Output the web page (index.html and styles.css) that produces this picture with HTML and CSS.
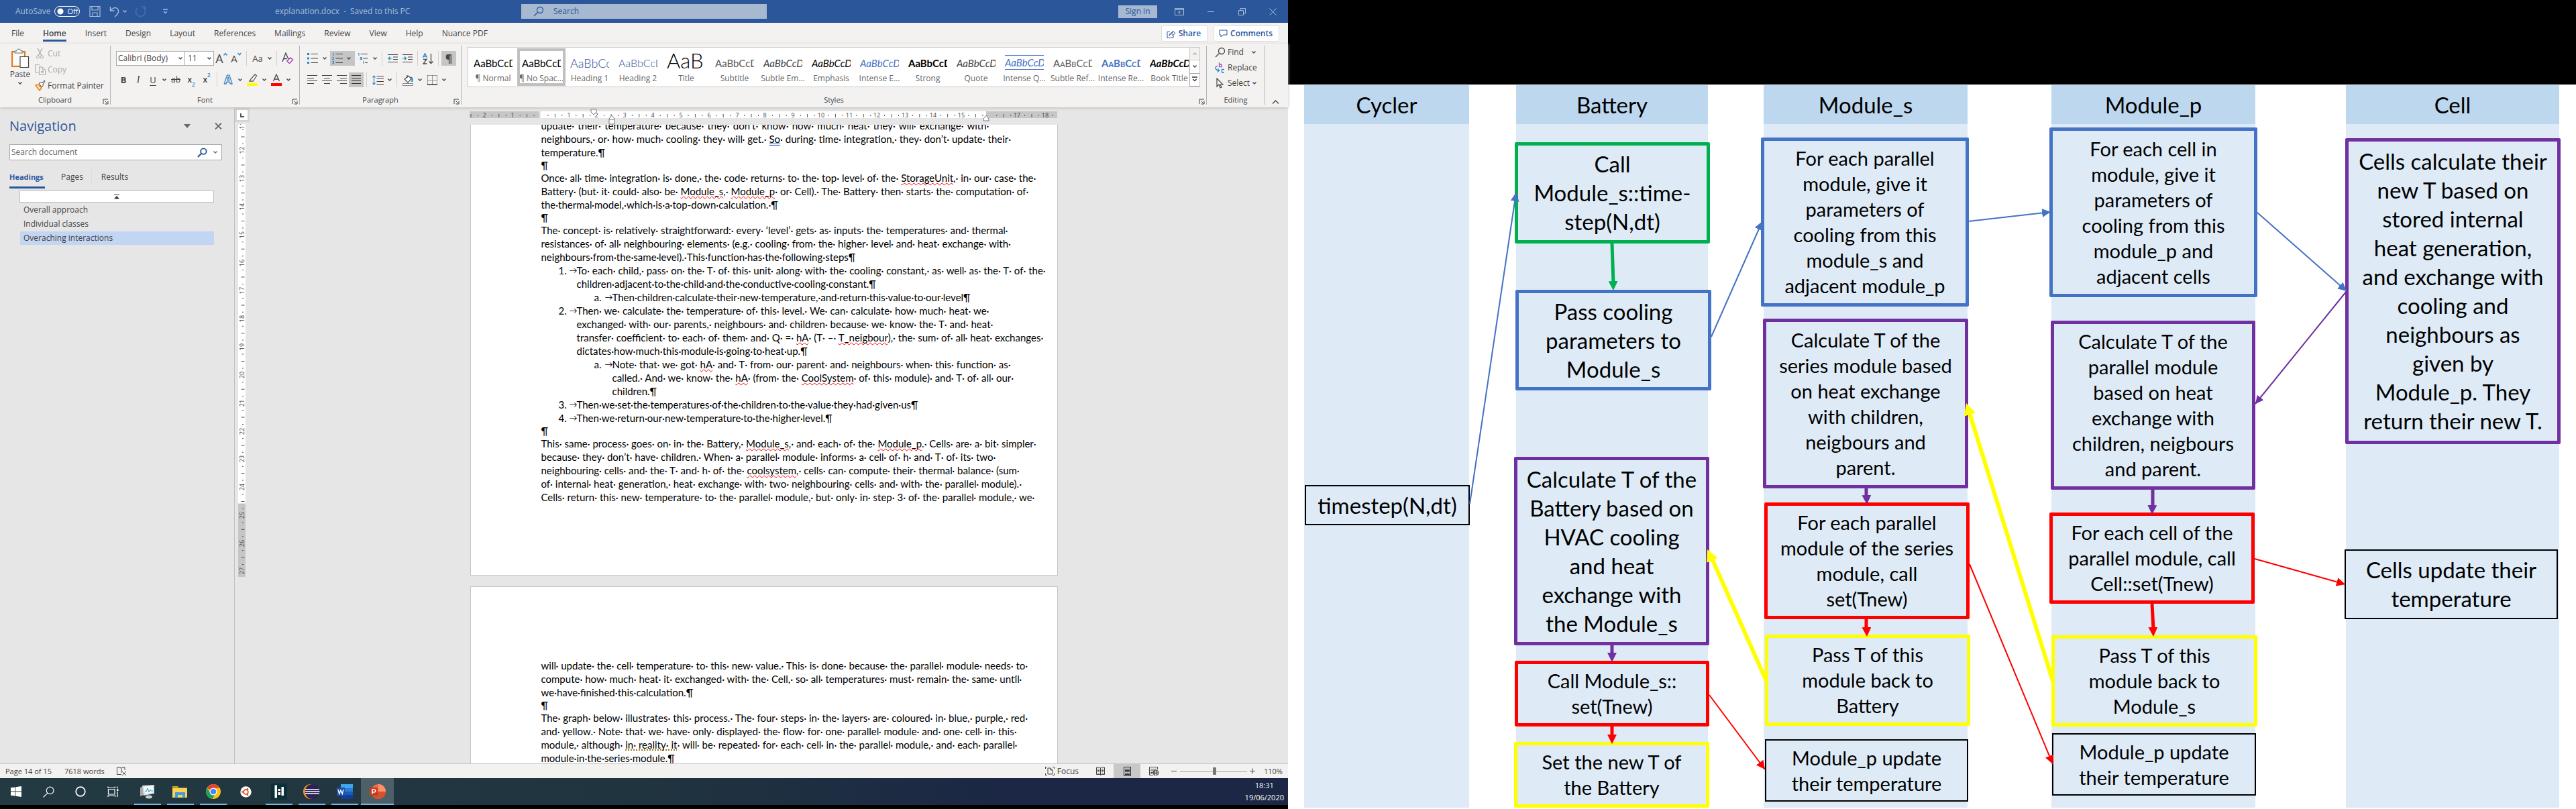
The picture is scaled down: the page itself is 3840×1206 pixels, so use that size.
FILE: index.html
```html
<!DOCTYPE html>
<html lang="en">
<head>
<meta charset="utf-8">
<title>explanation.docx - Saved to this PC</title>
<link rel="stylesheet" href="styles.css">
</head>
<body>
<svg class="defs" aria-hidden="true">
  <defs>
    <symbol id="chev" viewBox="0 0 8 8"><path d="M1.5 2.5 4 5l2.500-2.500" fill="none" stroke="currentColor" stroke-width="1.400"/></symbol>
    <symbol id="launch" viewBox="0 0 9 9"><path d="M1 8V1h7M3.500 3.500 7 7M8 3.500V8H3.500" fill="none" stroke="#444"/></symbol>
    <symbol id="glass" viewBox="0 0 16 16"><circle cx="10" cy="6" r="4.500" fill="none" stroke="currentColor" stroke-width="1.300"/><path d="M6.700 9.300 1 15" stroke="currentColor" stroke-width="1.300"/></symbol>
    <marker id="m-blue" viewBox="0 0 12 12" refX="12" refY="6" markerWidth="13" markerHeight="13" markerUnits="userSpaceOnUse" orient="auto"><path d="M0 0 12 6 0 12z" fill="#4472c4"/></marker>
    <marker id="m-purple-s" viewBox="0 0 12 12" refX="12" refY="6" markerWidth="12" markerHeight="12" markerUnits="userSpaceOnUse" orient="auto"><path d="M0 0 12 6 0 12z" fill="#7030a0"/></marker>
    <marker id="m-red-s" viewBox="0 0 12 12" refX="12" refY="6" markerWidth="13" markerHeight="13" markerUnits="userSpaceOnUse" orient="auto"><path d="M0 0 12 6 0 12z" fill="#f00"/></marker>
    <marker id="m-green" viewBox="0 0 12 12" refX="12" refY="6" markerWidth="14" markerHeight="14" markerUnits="userSpaceOnUse" orient="auto"><path d="M0 0 12 6 0 12z" fill="#00b050"/></marker>
    <marker id="m-purple" viewBox="0 0 12 12" refX="12" refY="6" markerWidth="14" markerHeight="14" markerUnits="userSpaceOnUse" orient="auto"><path d="M0 0 12 6 0 12z" fill="#7030a0"/></marker>
    <marker id="m-red" viewBox="0 0 12 12" refX="12" refY="6" markerWidth="14" markerHeight="14" markerUnits="userSpaceOnUse" orient="auto"><path d="M0 0 12 6 0 12z" fill="#f00"/></marker>
    <marker id="m-yellow" viewBox="0 0 12 12" refX="12" refY="6" markerWidth="18" markerHeight="18" markerUnits="userSpaceOnUse" orient="auto"><path d="M0 0 12 6 0 12z" fill="#ff0"/></marker>
  </defs>
</svg>
<div class="screens">
<section class="desktop">
  <header class="titlebar">
    <div class="quick">
      <label class="autosave">AutoSave <input type="checkbox"><span class="pill">Off</span></label>
      <button class="q save" aria-label="Save"><svg width="17" height="18" viewBox="0 0 17 18"><path d="M1 1.500h15v15H1zM4 1.500v5.500h9V1.500M5 16.500V11h7v5.500" fill="none" stroke="currentColor" stroke-width="1.200"/></svg></button>
      <button class="q undo" aria-label="Undo"><svg width="16" height="18" viewBox="0 0 16 18"><path d="M1.500 2v6h6M1.500 8C4 4 9 2 12 5c4 4 0 9-4 12" fill="none" stroke="currentColor" stroke-width="1.400"/></svg><svg width="8" height="8"><use href="#chev"/></svg></button>
      <button class="q redo" aria-label="Redo"><svg width="18" height="18" viewBox="0 0 18 18"><path d="M11 2h5v5M14 4a7 7 0 1 1-9 0" fill="none" stroke="currentColor" stroke-width="1.400"/></svg></button>
      <button class="q" aria-label="Customise"><svg width="9" height="9" viewBox="0 0 9 9"><path d="M1 1h7M2 4l2.500 2.500L7 4" fill="none" stroke="currentColor" stroke-width="1.300"/></svg></button>
    </div>
    <div class="doctitle">explanation.docx&nbsp; -&nbsp; Saved to this PC</div>
    <label class="topsearch"><svg width="16" height="16"><use href="#glass"/></svg><input type="text" placeholder="Search" aria-label="Search"></label>
    <div class="winctl">
      <button class="signin">Sign in</button>
      <button class="q" aria-label="Ribbon options"><svg width="14" height="11" viewBox="0 0 14 11"><path d="M.5.5h13v10H.5zM.5 2.500h13M7 9V5M5 6.500 7 4.500l2 2" fill="none" stroke="currentColor"/></svg></button>
      <button class="q" aria-label="Minimise"><svg width="11" height="11" viewBox="0 0 11 11"><path d="M0 5.500h10" stroke="currentColor"/></svg></button>
      <button class="q" aria-label="Restore"><svg width="11" height="11" viewBox="0 0 11 11"><path d="M.5 3.500h7v7h-7zM3 3.500V.5h7.500V8H8" fill="none" stroke="currentColor"/></svg></button>
      <button class="q" aria-label="Close"><svg width="11" height="11" viewBox="0 0 11 11"><path d="m.5.5 10 10M10.500.5l-10 10" stroke="currentColor"/></svg></button>
    </div>
  </header>
  <nav class="tabs">
    <a href="#">File</a><a href="#" class="on">Home</a><a href="#">Insert</a><a href="#">Design</a><a href="#">Layout</a><a href="#">References</a><a href="#">Mailings</a><a href="#">Review</a><a href="#">View</a><a href="#">Help</a><a href="#">Nuance PDF</a>
    <div class="share">
      <button><svg width="14" height="13" viewBox="0 0 14 13"><path d="M5 3.500H1v9h9V9M4 9c0-3 2-4.500 5-4.500V2l4 3.500L9 9V6.500C7 6.500 5 7 4 9z" fill="none" stroke="#2b579a"/></svg>Share</button>
      <button><svg width="13" height="12" viewBox="0 0 13 12"><path d="M1 1h11v7H6l-3 3V8H1z" fill="none" stroke="#2b579a"/></svg>Comments</button>
    </div>
  </nav>
  <div class="ribbon">
    <section class="group clip">
      <div class="tools clipbody">
        <button class="paste"><svg width="28" height="30" viewBox="0 0 28 30"><path d="M2 5h19v22H2z" fill="#fce9c8" stroke="#e07b1a" stroke-width="2"/><path d="M4 7h15v18H4z" fill="#fafafa"/><path d="M6 7V4h3c0-4 6-4 6 0h3v3z" fill="#fff" stroke="#666"/><path d="M14 12.500h12.500v16H14z" fill="#fff" stroke="#444" stroke-width="1.200"/></svg>Paste<svg width="8" height="8"><use href="#chev"/></svg></button>
        <div class="cliplist">
          <button class="off"><svg width="16" height="16" viewBox="0 0 16 16"><path d="m4 0 6 11M11 0 5 11" stroke="#aaa" stroke-width="1.300"/><circle cx="4.500" cy="13" r="2" fill="none" stroke="#aaa"/><circle cx="10.500" cy="13" r="2" fill="none" stroke="#aaa"/></svg>Cut</button>
          <button class="off"><svg width="16" height="16" viewBox="0 0 16 16"><path d="M6 12H.500V.500H6l2 2M6.500 4h5l4 4v7.500h-9zM11 4v4h4M9 10.500h4M9 12.500h4" fill="none" stroke="#aaa"/></svg>Copy</button>
          <button><svg width="16" height="16" viewBox="0 0 16 16"><path d="m1 7 4-1 5 5-3 4z" fill="#fce0b0" stroke="#e8821e" stroke-width="1.500"/><path d="m6 4 3-1 2 1 3-4 1 1-3 5 0 2-2 2z" fill="#fff" stroke="#444"/></svg>Format Painter</button>
        </div>
      </div>
      <div class="glabel">Clipboard<svg width="9" height="9"><use href="#launch"/></svg></div>
    </section>
    <section class="group font">
      <div class="tools">
        <div class="row">
          <span class="combo fname"><select aria-label="Font"><option>Calibri (Body)</option></select><svg width="8" height="8"><use href="#chev"/></svg></span>
          <span class="combo fsize"><select aria-label="Font size"><option>11</option></select><svg width="8" height="8"><use href="#chev"/></svg></span>
          <button class="w22 big">A<svg class="sup" width="6" height="6" viewBox="0 0 6 6"><path d="m.5 4.500 2.500-3 2.500 3" fill="none" stroke="#2088c8" stroke-width="1.300"/></svg></button>
          <button class="w22 mid">A<svg class="sup" width="6" height="6" viewBox="0 0 6 6"><path d="m.5 1 2.500 3 2.500-3" fill="none" stroke="#2088c8" stroke-width="1.300"/></svg></button>
          <i class="sep"></i>
          <button class="w24 aa">Aa</button><button class="c" aria-label="More"><svg width="8" height="8"><use href="#chev"/></svg></button>
          <i class="sep"></i>
          <button class="w24" aria-label="Clear formatting"><svg width="18" height="18" viewBox="0 0 18 18"><path d="M1 14 6 1l4 9M3 9.500h5" fill="none" stroke="#444" stroke-width="1.300"/><path d="m8 13 5-5 3.500 3-5 5.500z" fill="#fff" stroke="#a83cb8" stroke-width="1.500"/></svg></button>
        </div>
        <div class="row">
          <button class="w22 bold">B</button><button class="w22 ital">I</button><button class="w22 und">U</button><button class="c" aria-label="More"><svg width="8" height="8"><use href="#chev"/></svg></button>
          <button class="w22 strike">ab</button><button class="w24 sb">x<sub>2</sub></button><button class="w22 sb">x<sup>2</sup></button>
          <i class="sep"></i>
          <button class="w24 glow">A</button><button class="c" aria-label="More"><svg width="8" height="8"><use href="#chev"/></svg></button>
          <button class="w24" aria-label="Highlight"><svg width="16" height="18" viewBox="0 0 16 18"><path d="m6 8 6-7 2.500 2L9 11H4z" fill="#fff" stroke="#555" stroke-width="1.300"/><path d="M0 14h16v4H0z" fill="#ff0"/></svg></button><button class="c" aria-label="More"><svg width="8" height="8"><use href="#chev"/></svg></button>
          <button class="w24" aria-label="Font colour"><svg width="16" height="18" viewBox="0 0 16 18"><path d="M3.500 11 8 1l4.500 10M5 8h6" fill="none" stroke="#444" stroke-width="1.300"/><path d="M0 14h16v4H0z" fill="red"/></svg></button><button class="c" aria-label="More"><svg width="8" height="8"><use href="#chev"/></svg></button>
        </div>
      </div>
      <div class="glabel">Font<svg width="9" height="9"><use href="#launch"/></svg></div>
    </section>
    <section class="group para">
      <div class="tools">
        <div class="row">
          <button class="w24" aria-label="Bullets"><svg width="16" height="16" viewBox="0 0 16 16"><path d="M0 0h3v3H0zM0 6.500h3v3H0zM0 13h3v3H0z" fill="#2088c8"/><path d="M5.500 1.500H16M5.500 8H16M5.500 14.500H16" stroke="#444"/></svg></button><button class="c" aria-label="More"><svg width="8" height="8"><use href="#chev"/></svg></button>
          <span class="pressed"><button class="w22" aria-label="Numbering"><svg width="16" height="16" viewBox="0 0 16 16"><path d="M1 .5h1V4M.5 6.500h2V8L.5 9.500h2M.5 12h2v3.500h-2M1 14h1" fill="none" stroke="#2088c8"/><path d="M5.500 1.500H16M5.500 8H16M5.500 14.500H16" stroke="#444"/></svg></button><button class="c" aria-label="More"><svg width="8" height="8"><use href="#chev"/></svg></button></span>
          <button class="w24" aria-label="Multilevel list"><svg width="16" height="16" viewBox="0 0 16 16"><path d="M1 .5h1V4M4 6.500h2.500v3H4V8h2M9 12v4M9 10v1" fill="none" stroke="#2088c8"/><path d="M4.500 1.500H15M8.500 8H15M11 14.500h4" stroke="#444"/></svg></button><button class="c" aria-label="More"><svg width="8" height="8"><use href="#chev"/></svg></button>
          <i class="sep"></i>
          <button class="w22" aria-label="Decrease indent"><svg width="15" height="14" viewBox="0 0 15 14"><path d="M0 1.500h15M8 5h7M8 8.500h7M0 12.500h15" stroke="#444"/><path d="M6.500 7H1M3.500 4.500 1 7l2.500 2.500" fill="none" stroke="#2088c8" stroke-width="1.200"/></svg></button>
          <button class="w22" aria-label="Increase indent"><svg width="15" height="14" viewBox="0 0 15 14"><path d="M0 1.500h15M8 5h7M8 8.500h7M0 12.500h15" stroke="#444"/><path d="M0 7h5.500M3 4.500 5.500 7 3 9.500" fill="none" stroke="#2088c8" stroke-width="1.200"/></svg></button>
          <i class="sep"></i>
          <button class="w22" aria-label="Sort"><svg width="17" height="17" viewBox="0 0 17 17"><path d="M.5 7 3.500.5 6.500 7M1.500 5h4" fill="none" stroke="#2088c8" stroke-width="1.300"/><path d="M1 9.500h5L1 16h5.500M12.500 1v15M9.500 12.500l3 3 3-3" fill="none" stroke="#444" stroke-width="1.300"/></svg></button>
          <i class="sep"></i>
          <button class="w22 pressed pil">¶</button>
        </div>
        <div class="row">
          <button class="w22" aria-label="Align left"><svg width="15" height="14" viewBox="0 0 15 14"><path d="M0 .5h15M0 4.500h10M0 8.500h15M0 12.500h10" stroke="#444"/></svg></button>
          <button class="w22" aria-label="Centre"><svg width="15" height="14" viewBox="0 0 15 14"><path d="M0 .5h15M3 4.500h9M0 8.500h15M3 12.500h9" stroke="#444"/></svg></button>
          <button class="w22" aria-label="Align right"><svg width="15" height="14" viewBox="0 0 15 14"><path d="M0 .5h15M5 4.500h10M0 8.500h15M5 12.500h10" stroke="#444"/></svg></button>
          <button class="w22 pressed" aria-label="Justify"><svg width="14" height="14" viewBox="0 0 14 14"><path d="M0 .5h14M0 4.500h14M0 8.500h14M0 12.500h14" stroke="#333"/></svg></button>
          <i class="sep"></i>
          <button class="w24" aria-label="Line spacing"><svg width="17" height="15" viewBox="0 0 17 15"><path d="M6.500 1.500H17M6.500 5.500H17M6.500 9.500H17M6.500 13.500H17" stroke="#444"/><path d="M2.500 1v13M.5 3.500l2-2.500 2 2.500M.5 11.500l2 2.500 2-2.500" fill="none" stroke="#2088c8" stroke-width="1.200"/></svg></button><button class="c" aria-label="More"><svg width="8" height="8"><use href="#chev"/></svg></button>
          <i class="sep"></i>
          <button class="w24" aria-label="Shading"><svg width="16" height="17" viewBox="0 0 16 17"><path d="m3 7 6-5 4 5-5 5zM7 5V1" fill="#fff" stroke="#444" stroke-width="1.200"/><path d="M12 4c3 1 3 4 2 7" fill="none" stroke="#2088c8" stroke-width="2"/><path d="M.5 13.500h15v3H.5z" fill="#fff" stroke="#888"/></svg></button><button class="c" aria-label="More"><svg width="8" height="8"><use href="#chev"/></svg></button>
          <button class="w24" aria-label="Borders"><svg width="15" height="15" viewBox="0 0 15 15"><path d="M.5.5h14M.5.5v13M14.500.5v13M7.500.5v13M.5 7.500h14" stroke="#444" stroke-dasharray="1 1"/><path d="M0 14.500h15" stroke="#000" stroke-width="1.400"/></svg></button><button class="c" aria-label="More"><svg width="8" height="8"><use href="#chev"/></svg></button>
        </div>
      </div>
      <div class="glabel">Paragraph<svg width="9" height="9"><use href="#launch"/></svg></div>
    </section>
    <section class="group styles">
      <div class="gallery">
        <div class="cards">
          <button class="card"><b>AaBbCcDc</b><span>¶ Normal</span></button>
          <button class="card sel"><b>AaBbCcDc</b><span>¶ No Spac...</span></button>
          <button class="card h1"><b>AaBbCc</b><span>Heading 1</span></button>
          <button class="card h2"><b>AaBbCcD</b><span>Heading 2</span></button>
          <button class="card tt"><b>AaB</b><span>Title</span></button>
          <button class="card st"><b>AaBbCcD</b><span>Subtitle</span></button>
          <button class="card se"><b>AaBbCcDc</b><span>Subtle Em...</span></button>
          <button class="card em"><b>AaBbCcDc</b><span>Emphasis</span></button>
          <button class="card ie"><b>AaBbCcDc</b><span>Intense E...</span></button>
          <button class="card sg"><b>AaBbCcDc</b><span>Strong</span></button>
          <button class="card se"><b>AaBbCcDc</b><span>Quote</span></button>
          <button class="card iq"><b>AaBbCcDc</b><span>Intense Q...</span></button>
          <button class="card sr"><b>AaBbCcDc</b><span>Subtle Ref...</span></button>
          <button class="card ir"><b>AaBbCcDc</b><span>Intense Re...</span></button>
          <button class="card bt"><b>AaBbCcDc</b><span>Book Title</span></button>
        </div>
        <div class="updown">
          <button class="dim" aria-label="Up"><svg width="8" height="8" viewBox="0 0 8 8"><path d="M1.500 5.500 4 3l2.500 2.500" fill="none" stroke="#aaa" stroke-width="1.400"/></svg></button>
          <button aria-label="Down"><svg width="8" height="8"><use href="#chev"/></svg></button>
          <button aria-label="More styles"><svg width="8" height="9" viewBox="0 0 8 9"><path d="M0 1h8M1.500 4 4 6.500 6.500 4" fill="none" stroke="#333" stroke-width="1.400"/></svg></button>
        </div>
      </div>
      <div class="glabel">Styles<svg width="9" height="9"><use href="#launch"/></svg></div>
    </section>
    <section class="group edit">
      <div class="tools elist">
        <button><svg width="16" height="16"><use href="#glass"/></svg>Find<svg class="cv far" width="8" height="8"><use href="#chev"/></svg></button>
        <button><svg width="16" height="16" viewBox="0 0 16 16"><path d="M6.500 0v6.500h3.500V3H6.500" fill="none" stroke="#b04cc0" stroke-width="1.300"/><path d="M14 10.500h-3.500V15H14M4 5c-5 2-3 7 2 7M4 9.500 6.500 12 4 14.500" fill="none" stroke="#2088c8" stroke-width="1.300"/></svg>Replace</button>
        <button><svg width="16" height="16" viewBox="0 0 16 16"><path d="M3 1v12l3-3 2 5 2-1-2-4h4z" fill="none" stroke="#444" stroke-width="1.200"/></svg>Select<svg class="cv" width="8" height="8"><use href="#chev"/></svg></button>
      </div>
      <div class="glabel">Editing</div>
    </section>
    <button class="collapse" aria-label="Collapse ribbon"><svg width="11" height="8" viewBox="0 0 11 8"><path d="m1 6.500 4.500-4.500L10 6.500" fill="none" stroke="#444" stroke-width="1.400"/></svg></button>
  </div>

  <div class="work">
    <aside class="navpane">
      <div class="navhead"><h2>Navigation</h2><button aria-label="Pane options"><svg width="10" height="6" viewBox="0 0 10 6"><path d="M0 0h10L5 6z" fill="#666"/></svg></button><button aria-label="Close pane"><svg width="11" height="10" viewBox="0 0 11 10"><path d="m1 .5 9 9M10 .5l-9 9" stroke="#666" stroke-width="1.800"/></svg></button></div>
      <label class="navsearch"><input type="text" placeholder="Search document" aria-label="Search document"><svg width="15" height="15" viewBox="0 0 16 16"><circle cx="10" cy="6" r="4.500" fill="none" stroke="#2b579a" stroke-width="2"/><path d="M6.700 9.300 1 15" stroke="#2b579a" stroke-width="2.400"/></svg><svg width="8" height="8"><use href="#chev"/></svg></label>
      <div class="navtabs"><a href="#" class="on">Headings</a><a href="#">Pages</a><a href="#">Results</a></div>
      <button class="jump" aria-label="Jump to top"><svg width="8" height="7" viewBox="0 0 8 7"><path d="M0 0h8v1H0zM4 2l4 4.500H0z" fill="#333"/></svg></button>
      <ul class="outline"><li>Overall approach</li><li>Individual classes</li><li class="sel">Overaching interactions</li></ul>
    </aside>
    <div class="docarea">
      <div class="vrulercol">
        <div class="corner"><svg width="16" height="15" viewBox="0 0 16 15"><path d="M0 0h16v15H0z" fill="#fff"/><path d="M6 5v5h5" fill="none" stroke="#555" stroke-width="2"/></svg></div>
        <svg class="vruler" width="12" height="676" viewBox="0 0 12 676">
          <path d="M0 0h11v565H0z" fill="#fff"/><path d="M0 566h11v109H0z" fill="#c6c6c6"/>
          <path d="M7 18.600V676" stroke="#555" stroke-width="5" stroke-dasharray="1 40.800"/>
          <path d="M7 8.100V676" stroke="#555" stroke-width="2" stroke-dasharray="1 19.900"/>
          <g class="rnum" transform="rotate(-90)"><text x="-2" y="9">11</text><text x="-39" y="9">12</text><text x="-81" y="9">13</text><text x="-123" y="9">14</text><text x="-165" y="9">15</text><text x="-207" y="9">16</text><text x="-248" y="9">17</text><text x="-290" y="9">18</text><text x="-332" y="9">19</text><text x="-374" y="9">20</text><text x="-416" y="9">21</text><text x="-458" y="9">22</text><text x="-499" y="9">23</text><text x="-541" y="9">24</text><text x="-583" y="9">25</text><text x="-625" y="9">26</text><text x="-666" y="9">27</text></g>
        </svg>
      </div>
      <div class="canvas">
        <svg class="hruler" width="876" height="24" viewBox="0 0 876 24">
          <path d="M0 4h104v10H0zM770 4h106v10H770z" fill="#c6c6c6"/><path d="M106 4h664v10H106z" fill="#fff"/>
          <path d="M1.500 10.500H876" stroke="#555" stroke-width="5" stroke-dasharray="1 40.800"/>
          <path d="M12 10H876" stroke="#555" stroke-width="2" stroke-dasharray="1 19.900"/>
          <g class="rnum"><text x="22" y="13">2</text><text x="64" y="13">1</text><text x="148" y="13">1</text><text x="189" y="13">2</text><text x="231" y="13">3</text><text x="273" y="13">4</text><text x="315" y="13">5</text><text x="357" y="13">6</text><text x="399" y="13">7</text><text x="440" y="13">8</text><text x="482" y="13">9</text><text x="524" y="13">10</text><text x="566" y="13">11</text><text x="607" y="13">12</text><text x="649" y="13">13</text><text x="691" y="13">14</text><text x="733" y="13">15</text><text x="816" y="13">17</text><text x="858" y="13">18</text></g>
          <path d="M181 1h8v4l-4 4-4-4z" fill="#fff" stroke="#777"/><path d="m212 10 4 5v8h-8v-8zM208 16h8" fill="#fff" stroke="#777"/><path d="m770 10 4 5v3h-8v-3z" fill="#fff" stroke="#777"/>
        </svg>
        <div class="scroller">
          <article class="page first">
            <p><span class="ln">update· their· temperature· because· they· don’t· know· how· much· heat· they· will· exchange· with·</span><span class="ln">neighbours,· or· how· much· cooling· they· will· get.· <u class="gram">So</u>· during· time· integration,· they· don’t· update· their·</span><span class="ln end">temperature.¶</span></p>
            <p class="blank">¶</p>
            <p><span class="ln">Once· all· time· integration· is· done,· the· code· returns· to· the· top· level· of· the· <u>StorageUnit</u>,· in· our· case· the·</span><span class="ln">Battery· (but· it· could· also· be· <u>Module_s</u>,· <u>Module_p</u>· or· Cell).· The· Battery· then· starts· the· computation· of·</span><span class="ln end">the·thermal·model,·which·is·a·top-down·calculation.·¶</span></p>
            <p class="blank">¶</p>
            <p><span class="ln">The· concept· is· relatively· straightforward:· every· ‘level’· gets· as· inputs· the· temperatures· and· thermal·</span><span class="ln">resistances· of· all· neighbouring· elements· (e.g.· cooling· from· the· higher· level· and· heat· exchange· with·</span><span class="ln end">neighbours·from·the·same·level).·This·function·has·the·following·steps¶</span></p>
            <ol class="steps">
              <li><span>1.</span><span class="tab">→</span><p><span class="ln">To· each· child,· pass· on· the· T· of· this· unit· along· with· the· cooling· constant,· as· well· as· the· T· of· the·</span><span class="ln end">children·adjacent·to·the·child·and·the·conductive·cooling·constant.¶</span></p></li>
              <li class="sub"><span>a.</span><span class="tab">→</span><p><span class="ln end">Then·children·calculate·their·new·temperature,·and·return·this·value·to·our·level¶</span></p></li>
              <li><span>2.</span><span class="tab">→</span><p><span class="ln">Then· we· calculate· the· temperature· of· this· level.· We· can· calculate· how· much· heat· we·</span><span class="ln">exchanged· with· our· parents,· neighbours· and· children· because· we· know· the· T· and· heat·</span><span class="ln">transfer· coefficient· to· each· of· them· and· Q· =· <u>hA</u>· (T· –· <u>T_neigbour</u>),· the· sum· of· all· heat· exchanges·</span><span class="ln end">dictates·how·much·this·module·is·going·to·heat·up.¶</span></p></li>
              <li class="sub"><span>a.</span><span class="tab">→</span><p><span class="ln">Note· that· we· got· <u>hA</u>· and· T· from· our· parent· and· neighbours· when· this· function· as·</span><span class="ln">called.· And· we· know· the· <u>hA</u>· (from· the· <u>CoolSystem</u>· of· this· module)· and· T· of· all· our·</span><span class="ln end">children.¶</span></p></li>
              <li><span>3.</span><span class="tab">→</span><p><span class="ln end">Then·we·set·the·temperatures·of·the·children·to·the·value·they·had·given·us¶</span></p></li>
              <li><span>4.</span><span class="tab">→</span><p><span class="ln end">Then·we·return·our·new·temperature·to·the·higher·level.¶</span></p></li>
            </ol>
            <p class="blank">¶</p>
            <p><span class="ln">This· same· process· goes· on· in· the· Battery,· <u>Module_s</u>,· and· each· of· the· <u>Module_p</u>.· Cells· are· a· bit· simpler·</span><span class="ln">because· they· don’t· have· children.· When· a· parallel· module· informs· a· cell· of· h· and· T· of· its· two·</span><span class="ln">neighbouring· cells· and· the· T· and· h· of· the· <u>coolsystem</u>,· cells· can· compute· their· thermal· balance· (sum·</span><span class="ln">of· internal· heat· generation,· heat· exchange· with· two· neighbouring· cells· and· with· the· parallel· module).·</span><span class="ln">Cells· return· this· new· temperature· to· the· parallel· module,· but· only· in· step· 3· of· the· parallel· module,· we·</span></p>
          </article>
          <article class="page second">
            <p><span class="ln">will· update· the· cell· temperature· to· this· new· value.· This· is· done· because· the· parallel· module· needs· to·</span><span class="ln">compute· how· much· heat· it· exchanged· with· the· Cell,· so· all· temperatures· must· remain· the· same· until·</span><span class="ln end">we·have·finished·this·calculation.¶</span></p>
            <p class="blank">¶</p>
            <p><span class="ln">The· graph· below· illustrates· this· process.· The· four· steps· in· the· layers· are· coloured· in· blue,· purple,· red·</span><span class="ln">and· yellow.· Note· that· we· have· only· displayed· the· flow· for· one· parallel· module· and· one· cell· in· this·</span><span class="ln">module,· although· <u class="clar">in· reality· it</u>· will· be· repeated· for· each· cell· in· the· parallel· module,· and· each· parallel·</span><span class="ln end">module·in·the·series·module.¶</span></p>
          </article>
        </div>
      </div>
    </div>
  </div>

  <footer class="status">
    <span class="pg">Page 14 of 15</span><span class="wc">7618 words</span>
    <svg width="15" height="13" viewBox="0 0 15 13"><path d="M7 11.500H.500V1H5l2 1.500V9M7 2.500 8 1h4v4M8 7l6 6M14 7l-6 6" fill="none" stroke="#444"/></svg>
    <div class="views">
      <button class="focus"><svg width="14" height="13" viewBox="0 0 14 13"><path d="M3 .5H.500V3M11 .5h2.500V3M3 12.500H.500V10M11 12.500h2.500V10M4 2h4l3 3v6H4zM8 2v3h3" fill="none" stroke="#444"/></svg>Focus</button>
      <button class="v" aria-label="Read mode"><svg width="13" height="13" viewBox="0 0 13 13"><path d="M6.500 2v10.500M.5 1h5l1 1 1-1h5v10.500h-5l-1 1-1-1h-5zM2 3.500h3M2 5.500h3M2 7.500h3M2 9.500h3M8 3.500h3M8 5.500h3M8 7.500h3M8 9.500h3" fill="none" stroke="#444"/></svg></button>
      <button class="v on" aria-label="Print layout"><svg width="11" height="14" viewBox="0 0 11 14"><path d="M.5.5h10v13H.5zM2 3.500h7M2 5.500h7M2 7.500h7M2 9.500h7M2 11.500h7" fill="none" stroke="#222"/></svg></button>
      <button class="v" aria-label="Web layout"><svg width="15" height="13" viewBox="0 0 15 13"><path d="M6 12.500H.500V.500h12V4M2 3.500h9M2 6h5M2 8.500h4M2 10.500h3" fill="none" stroke="#444"/><circle cx="10" cy="9" r="4" fill="#f3f2f1" stroke="#444"/><path d="M6 8h8M6 10.500h8M8.500 5.500v7M11.500 5.500v7" stroke="#444"/></svg></button>
      <button class="pm" aria-label="Zoom out"><svg width="9" height="9" viewBox="0 0 9 9"><path d="M0 4.500h8" stroke="#444"/></svg></button>
      <input class="zoom" type="range" min="10" max="210" value="113" aria-label="Zoom">
      <button class="pm" aria-label="Zoom in"><svg width="9" height="9" viewBox="0 0 9 9"><path d="M0 4.500h8M4 .5v8" stroke="#444"/></svg></button>
      <span class="pct">110%</span>
    </div>
  </footer>
  <div class="taskbar">
    <button class="sys" aria-label="Start"><svg width="16" height="16" viewBox="0 0 16 16"><path d="M0 2.300 6.500 1.400v6.200H0zM7.300 1.300 16 0v7.600H7.300zM0 8.400h6.500v6.200L0 13.700zM7.300 8.400H16V16l-8.700-1.300z" fill="#fff"/></svg></button>
    <button class="sys" aria-label="Search"><svg width="17" height="17" viewBox="0 0 16 16"><circle cx="10" cy="6" r="5" fill="none" stroke="#fff" stroke-width="1.100"/><path d="M6.500 9.500.5 15.500" stroke="#fff" stroke-width="1.100"/></svg></button>
    <button class="sys" aria-label="Cortana"><svg width="16" height="16" viewBox="0 0 16 16"><circle cx="8" cy="8" r="6.800" fill="none" stroke="#fff" stroke-width="1.700"/></svg></button>
    <button class="sys last" aria-label="Task view"><svg width="17" height="16" viewBox="0 0 17 16"><path d="M1.500 4.500h9.500v7.500H1.500zM1 .5v2h10.500v-2M1 16v-2h10.500v2M15 .5v3M15 8v8" fill="none" stroke="#fff" stroke-width="1.200"/><path d="M14 4.500h2.500V7H14z" fill="#fff"/></svg></button>
    <button class="app run" aria-label="Performance monitor"><svg width="24" height="22" viewBox="0 0 24 22"><path d="m1 5 5-2v13l-5 2z" fill="#aaa"/><ellipse cx="14" cy="19" rx="5" ry="2.500" fill="#ccc"/><path d="M4 2 22 1v13L6 17z" fill="#d8dcdc"/><path d="M6.500 3.500 20 2.500v10L8 14.500z" fill="#f4fbff"/><path d="m8 10 2 1 2-5 2 6 2-4 1 2h3" fill="none" stroke="#3a9cd0"/></svg></button>
    <button class="app run" aria-label="File Explorer"><svg width="23" height="19" viewBox="0 0 23 19"><path d="M0 1h8l1.500 2H0z" fill="#d9a11a"/><path d="M0 3.500h22V18H0z" fill="#fbd35c"/><path d="M4 10h15v8.500h-4V14H8v4.500H4z" fill="#3f9ed8"/></svg></button>
    <button class="app run" aria-label="Chrome"><svg width="22" height="22" viewBox="0 0 22 22"><circle cx="11" cy="11" r="11" fill="#fbc116"/><path d="M11 11 1.500 5.500A11 11 0 0 1 20.500 5.500L11 6z" fill="#dc4437"/><path d="M1.500 5.500a11 11 0 0 0 8 16.400L13 16 6 12z" fill="#1da160"/><circle cx="11" cy="11" r="5.500" fill="#fff"/><circle cx="11" cy="11" r="4.300" fill="#4688f1"/></svg></button>
    <button class="app" aria-label="Ubuntu"><svg width="17" height="17" viewBox="0 0 17 17"><circle cx="8.500" cy="8.500" r="8.200" fill="#fff"/><circle cx="8.500" cy="8.500" r="3.400" fill="none" stroke="#dd4814" stroke-width="1.700"/><circle cx="3.500" cy="8.500" r="1.300" fill="#dd4814"/><circle cx="11" cy="4.200" r="1.300" fill="#dd4814"/><circle cx="11" cy="12.800" r="1.300" fill="#dd4814"/></svg></button>
    <button class="app run" aria-label="H app"><svg width="24" height="24" viewBox="0 0 24 24"><path d="M0 0h24v24H0z" fill="#0d2f3a"/><path d="M5.500 2.500h3.500v19H5.500zM15.500 5H19v13h-3.500zM10.500 8h3.500v3h-3.500zM10.500 13h3.500v4h-3.500z" fill="#fff"/></svg></button>
    <button class="app run" aria-label="Eclipse"><svg width="25" height="22" viewBox="0 0 25 22"><circle cx="11" cy="11" r="11" fill="#f7941e"/><circle cx="13.500" cy="11" r="11" fill="#2c2255"/><path d="M3 8h21M2.500 11h22M3 14h21" stroke="#fff" stroke-width="1.600"/></svg></button>
    <button class="app run" aria-label="Word"><svg width="24" height="22" viewBox="0 0 24 22"><path d="M6 0h18v6H6z" fill="#41a5ee"/><path d="M6 6h18v5H6z" fill="#2b7cd3"/><path d="M6 11h18v5H6z" fill="#185abd"/><path d="M6 16h18v6H6z" fill="#103f91"/><path d="M0 5h12v12H0z" fill="#1a52a8"/><path d="m2 8 1.800 6.500L6 9l2.200 5.500L10 8" fill="none" stroke="#fff" stroke-width="1.400"/></svg></button>
    <button class="app run active" aria-label="PowerPoint"><svg width="24" height="22" viewBox="0 0 24 22"><circle cx="13" cy="11" r="11" fill="#ed6c47"/><path d="M13 0a11 11 0 0 1 11 11H13z" fill="#ff8f6b"/><path d="M2 11h22a11 11 0 0 1-22 0z" fill="#d35230"/><path d="M0 5h12v12H0z" fill="#c43e1c"/><path d="M4 14.500V8h2.500c3 0 3 4 0 4H4" fill="none" stroke="#fff" stroke-width="1.500"/></svg></button>
    <div class="clock"><span>18:31</span><span>19/06/2020</span></div>
  </div>
</section>

<section class="slide">
  <div class="diagram">
    <div class="lane l-cycler"><h3>Cycler</h3></div>
    <div class="lane l-battery"><h3>Battery</h3></div>
    <div class="lane l-ms"><h3>Module_s</h3></div>
    <div class="lane l-mp"><h3>Module_p</h3></div>
    <div class="lane l-cell"><h3>Cell</h3></div>

    <div class="node thin big n-step">timestep(N,dt)</div>
    <div class="node green big n-b1">Call<br>Module_s::time-<br>step(N,dt)</div>
    <div class="node blue big n-b2">Pass cooling<br>parameters to<br>Module_s</div>
    <div class="node purple big n-b3">Calculate T of the<br>Battery based on<br>HVAC cooling<br>and heat<br>exchange with<br>the Module_s</div>
    <div class="node red n-b4">Call Module_s::<br>set(Tnew)</div>
    <div class="node yellow n-b5">Set the new T of<br>the Battery</div>
    <div class="node blue n-s1">For each parallel<br>module, give it<br>parameters of<br>cooling from this<br>module_s and<br>adjacent module_p</div>
    <div class="node purple n-s2">Calculate T of the<br>series module based<br>on heat exchange<br>with children,<br>neigbours and<br>parent.</div>
    <div class="node red n-s3">For each parallel<br>module of the series<br>module, call<br>set(Tnew)</div>
    <div class="node yellow n-s4">Pass T of this<br>module back to<br>Battery</div>
    <div class="node thin n-s5">Module_p update<br>their temperature</div>
    <div class="node blue n-p1">For each cell in<br>module, give it<br>parameters of<br>cooling from this<br>module_p and<br>adjacent cells</div>
    <div class="node purple n-p2">Calculate T of the<br>parallel module<br>based on heat<br>exchange with<br>children, neigbours<br>and parent.</div>
    <div class="node red n-p3">For each cell of the<br>parallel module, call<br>Cell::set(Tnew)</div>
    <div class="node yellow n-p4">Pass T of this<br>module back to<br>Module_s</div>
    <div class="node thin n-p5">Module_p update<br>their temperature</div>
    <div class="node purple big n-c1">Cells calculate their<br>new T based on<br>stored internal<br>heat generation,<br>and exchange with<br>cooling and<br>neighbours as<br>given by<br>Module_p. They<br>return their new T.</div>
    <div class="node thin big n-c2">Cells update their<br>temperature</div>

    <svg class="links" viewBox="0 0 1920 1080" width="1920" height="1080" fill="none">
      <g stroke="#4472c4" stroke-width="2">
        <path d="M271 625 340 161" marker-end="url(#m-blue)"/>
        <path d="M631 376 707 204" marker-end="url(#m-blue)"/>
        <path d="M1014 204 1137 190" marker-end="url(#m-blue)"/>
        <path d="M1445 191 1578 308" marker-end="url(#m-blue)"/>
      </g>
      <path d="M1578 308 1442 476" stroke="#7030a0" stroke-width="2" marker-end="url(#m-purple-s)"/>
      <g stroke="#f00" stroke-width="2">
        <path d="M628 910 711 1021" marker-end="url(#m-red-s)"/>
        <path d="M1016 715 1140 1013" marker-end="url(#m-red-s)"/>
        <path d="M1441 707 1576 745" marker-end="url(#m-red-s)"/>
      </g>
      <path d="M483 237 485 296" stroke="#00b050" stroke-width="5"/><path d="M483 237 485 307" marker-end="url(#m-green)" stroke="none"/>
      <g stroke="#7030a0" stroke-width="5">
        <path d="M483 836v14M862 602v14M1289 604v26"/>
        <g stroke="none"><path d="M483 836v25" marker-end="url(#m-purple)"/><path d="M862 602 863 626" marker-end="url(#m-purple)"/><path d="M1289 604 1288 641" marker-end="url(#m-purple)"/></g>
      </g>
      <g stroke="#f00" stroke-width="5">
        <path d="M483 957v14M862 797v14M1288 774l2 38"/>
        <g stroke="none"><path d="M483 957v26" marker-end="url(#m-red)"/><path d="M862 797 863 823" marker-end="url(#m-red)"/><path d="M1288 774 1290 823" marker-end="url(#m-red)"/></g>
      </g>
      <g stroke="#ff0" stroke-width="6">
        <path d="M713 889 633 709M1140 889 1016 490"/>
        <g stroke="none"><path d="M713 889 625 693" marker-end="url(#m-yellow)"/><path d="M1140 889 1011 475" marker-end="url(#m-yellow)"/></g>
      </g>
    </svg>
  </div>
</section>
</div>
</body>
</html>
```
FILE: styles.css
```css
* { box-sizing: border-box; }
body { margin: 0; background: #000; font-family: "Open Sans", "Noto Sans", sans-serif; font-size: 12px; line-height: 16px; color: #444; }
button { font: inherit; color: inherit; background: none; border: 0; padding: 0; margin: 0; display: flex; align-items: center; justify-content: center; white-space: nowrap; }
input, select { font: inherit; color: inherit; border: 0; background: none; padding: 0; margin: 0; outline: 0; min-width: 0; }
a { color: inherit; text-decoration: none; }
p, h2, h3, ul, ol { margin: 0; padding: 0; list-style: none; font-weight: 400; }
svg { flex: none; display: block; }
.defs { position: absolute; width: 0; height: 0; }
.screens { display: grid; grid-template-columns: minmax(0, 1fr) minmax(0, 1fr); min-height: 100vh; }
.desktop { display: flex; flex-direction: column; min-width: 0; height: 100vh; padding-bottom: 6px; }

/* title bar */
.titlebar { height: 34px; flex: none; background: #2b579a; color: #a9bddb; display: grid; grid-template-columns: 410px 367px minmax(0, 366px) minmax(0, 1fr); align-items: center; }
.quick { display: flex; align-items: center; padding-left: 23px; }
.autosave { display: flex; align-items: center; gap: 6px; width: 110px; }
.autosave input { position: absolute; opacity: 0; }
.pill { width: 38px; height: 16px; border: 1px solid #fff; border-radius: 8px; color: #fff; font-size: 11px; line-height: 14px; padding-left: 18px; background: radial-gradient(circle at 8px 7px, #fff 4px, transparent 5px); }
.undo { gap: 3px; margin: 0 10px 0 13px; }
.redo { color: #4a72ad; margin-right: 24px; }
.topsearch { height: 22px; background: #a6b9d1; color: #2b579a; display: flex; align-items: center; gap: 14px; padding-left: 18px; }
.topsearch input { flex: 1; }
::placeholder { color: inherit; opacity: 1; }
.winctl { display: flex; align-items: center; justify-content: flex-end; gap: 35px; padding-right: 17px; }
.signin { width: 58px; height: 19px; background: #a6b9d1; color: #2b579a; margin-right: -9px; }

/* tabs */
.tabs { height: 31px; flex: none; background: #f3f2f1; display: flex; align-items: stretch; padding: 4px 13px 3px 17px; font-size: 12px; line-height: 24px; gap: 28px; }
.tabs .on { font-weight: 600; border-bottom: 3px solid #2b579a; }
.share { display: flex; gap: 9px; margin-left: auto; font-weight: 600; color: #2b579a; }
.share button { height: 24px; background: #fff; border: 1px solid #e1dfdd; border-radius: 2px; padding: 0 9px 0 7px; gap: 4px; }

/* ribbon */
.ribbon { height: 95px; flex: none; background: #f3f2f1; display: flex; padding: 3px 0 4px; position: relative; z-index: 1; box-shadow: 0 1px 4px #bbb; }
.group { border-right: 1px solid #b5b5b5; display: flex; flex-direction: column; justify-content: space-between; position: relative; }
.glabel { text-align: center; line-height: 14px; font-size: 11px; display: flex; justify-content: center; }
.glabel svg { position: absolute; right: 2px; bottom: 0; }
.tools { display: flex; flex-direction: column; gap: 10px; padding-top: 8px; }
.row { display: flex; height: 22px; align-items: stretch; }
.sep { width: 1px; margin: 0 4px; background: #d0d0d0; }
.w22 { width: 22px; } .w24 { width: 24px; } .c { width: 12px; }
.clip { width: 165px; } .font { width: 282px; } .para { width: 241px; } .edit { width: 87px; }
.font .tools { padding-left: 8px; } .para .tools { padding-left: 7px; }
.pressed { background: #c5c5c5; }
span.pressed { display: flex; width: 37px; margin-left: 2px; }
.clipbody { flex-direction: row; padding: 4px 0 0 15px; gap: 7px; }
.paste { flex-direction: column; width: 30px; gap: 1px; justify-content: flex-start; }
.cliplist { display: flex; flex-direction: column; gap: 8px; }
.cliplist button { justify-content: flex-start; gap: 3px; height: 16px; }
.off { color: #aaa; }
.combo { border: 1px solid #ababab; background: #fff; display: flex; align-items: center; padding: 0 2px; }
.combo select { appearance: none; flex: 1; color: #444; }
.fname { width: 103px; } .fsize { width: 43px; border-left: 0; padding-left: 4px; }
.big { font-size: 18px; } .mid { font-size: 15px; } .aa { font-size: 13px; }
.sup { align-self: flex-start; margin-top: 2px; }
.bold { font-weight: 700; font-size: 13px; } .ital { font: italic 14px "Liberation Serif", serif; }
.und { text-decoration: underline; font-size: 13px; text-underline-offset: 3px; } .strike { text-decoration: line-through; }
.sb { font-weight: 600; } .sb sub, .sb sup { font-size: 8px; color: #2088c8; line-height: 8px; } .sb sub { align-self: flex-end; } .sb sup { align-self: flex-start; }
.glow { font-weight: 700; font-size: 17px; color: #fff; -webkit-text-stroke: 1px #2070b8; text-shadow: 0 0 2px #7db8e8; }
.pil { font-size: 16px; font-weight: 700; }
.styles { flex: 1; min-width: 0; padding: 2px 9px 0; }
.gallery { display: flex; height: 60px; border: 1px solid #c8c8c8; background: #fff; }
.cards { flex: 1; display: flex; overflow: hidden; padding: 1px; }
.card { flex: none; width: 72px; flex-direction: column; justify-content: flex-end; font-size: 12px; color: #666; overflow: hidden; gap: 5px; padding-bottom: 3px; }
.card b { font: 15px/20px Lato, sans-serif; width: 58px; overflow: hidden; color: #000; text-align: left; }
.card.sel { border: 4px solid #c0c0c0; padding-bottom: 0; }
.card.sel span { margin: 0 -6px -1px; }
.card.h1 b { font-size: 18px; font-weight: 300; color: #2f5496; } .card.h2 b { font-size: 16px; font-weight: 300; color: #2f5496; }
.card.tt b { font-size: 31px; line-height: 28px; font-weight: 300; }
.card.st b { color: #5a5a5a; } .card.se b { font-style: italic; color: #404040; } .card.em b { font-style: italic; } .card.ie b { font-style: italic; color: #4472c4; }
.card.sg b { font-weight: 700; } .card.bt b { font-weight: 700; font-style: italic; }
.card.iq b { font-style: italic; color: #4472c4; border: solid #4472c4; border-width: 1px 0; }
.card.sr b { font-variant: small-caps; color: #5a5a5a; } .card.ir b { font-variant: small-caps; font-weight: 700; color: #4472c4; }
.updown { width: 15px; display: flex; flex-direction: column; }
.updown button { flex: 1; border-left: 1px solid #ababab; border-bottom: 1px solid #ababab; }
.updown .dim { background: #f3f2f1; border-color: #c8c8c8; }
.elist { gap: 7px; padding: 2px 0 0 12px; }
.elist button { justify-content: flex-start; gap: 3px; height: 16px; }
.far { margin-left: 8px; }
.collapse { margin: auto 13px 0 10px; height: 8px; width: 11px; }

/* workspace */
.work { flex: 1; min-height: 0; display: flex; background: #e6e6e6; }
.navpane { width: 350px; flex: none; border-right: 1px solid #c0c0c0; padding: 14px 18px 0 14px; }
.navhead { display: flex; align-items: center; gap: 36px; }
.navhead h2 { font-size: 20px; line-height: 28px; color: #2b579a; margin-right: auto; }
.navsearch { display: flex; align-items: center; gap: 8px; height: 24px; border: 1px solid #ababab; background: #fff; margin-top: 13px; padding: 0 5px 0 2px; color: #666; }
.navsearch input { flex: 1; }
.navtabs { display: flex; margin-top: 14px; height: 28px; line-height: 22px; }
.navtabs a { padding: 0 12px; border-right: 1px solid #dcdcdc; height: 22px; }
.navtabs a:last-child { border: 0; padding-left: 14px; }
.navtabs .on { padding: 0; width: 53px; margin-right: 12px; color: #2b579a; font-weight: 700; font-size: 11px; border-right: 0; border-bottom: 3px solid #2b579a; height: 28px; }
.jump { width: 290px; height: 18px; background: #fff; border: 1px solid #c0c0c0; margin: 3px 0 1px 15px; }
.outline { margin: 0 12px 0 16px; }
.outline li { height: 20px; line-height: 20px; margin-bottom: 1px; padding-left: 5px; }
.outline .sel { background: #c2d5f2; }

.docarea { flex: 1; min-width: 0; display: flex; overflow: hidden; }
.vrulercol { width: 22px; flex: none; }
.corner { background: #d4d4d4; width: 22px; height: 22px; padding: 4px 3px; margin-bottom: 3px; }
.vruler { margin-left: 5px; }
.rnum { font: 9px "Open Sans", sans-serif; fill: #444; text-anchor: middle; stroke: none; }
.canvas { flex: 1; min-width: 0; display: flex; flex-direction: column; align-items: center; padding: 1px 17px 0 0; }
.hruler { margin-top: 1px; }
.scroller { flex: 1; min-height: 0; width: 876px; overflow: hidden; display: flex; flex-direction: column; gap: 16px; margin-left: 2px; }
.page { flex: none; width: 876px; background: #fff; border: 1px solid #c6c6c6; padding: 0 101px 0 105px; font: 15px/20px Lato, "Liberation Sans", sans-serif; color: #000; }
.first { margin-top: -10px; padding-bottom: 106px; }
.second { padding-top: 107px; padding-bottom: 107px; }
.ln { display: block; white-space: nowrap; text-align-last: justify; }
.ln.end { text-align-last: left; }
.blank { line-height: 18px; }
.page u { text-decoration: underline wavy #f00 1px; text-decoration-skip-ink: none; }
.page u.gram { text-decoration: underline double #2b5fd0 1px; }
.page u.clar { text-decoration: underline dotted #a0721a 2px; }
.steps li { display: grid; grid-template-columns: 16px 11px minmax(0, 1fr); padding-left: 26px; }
.steps .sub { padding-left: 79px; }
.tab { font-size: 12px; overflow: hidden; }

/* status bar and taskbar */
.status { height: 22px; flex: none; background: #f3f2f1; border-top: 1px solid #c6c6c6; display: flex; align-items: center; padding: 0 8px; font-size: 11px; }
.pg { width: 88px; } .wc { width: 78px; }
.views { margin-left: auto; display: flex; align-items: center; height: 100%; }
.focus { gap: 4px; margin-right: 12px; font-size: 12px; }
.v { width: 40px; height: 100%; }
.on.v { background: #c8c8c8; }
.pm { width: 9px; } .v + .pm { margin-left: 6px; }
.zoom { appearance: none; width: 100px; height: 12px; margin: 0 4px; background: linear-gradient(#aaa, #aaa) 0 6px / 100% 1px no-repeat; }
.zoom::-webkit-slider-thumb { appearance: none; width: 5px; height: 11px; background: #777; }
.pct { margin-left: 12px; width: 28px; }
.taskbar { height: 40px; flex: none; background: linear-gradient(90deg, #233a42, #20343f 50%, #1b2744 78%); display: flex; padding-right: 6px; color: #fff; }
.sys { width: 48px; } .sys.last { margin-right: 3px; }
.app { width: 49px; }
.run { background: linear-gradient(#76b9ed, #76b9ed) 50% 100% / 40px 2px no-repeat; }
.active { background: linear-gradient(#76b9ed, #76b9ed) 50% 100% / 100% 2px no-repeat #4d6067; }
.clock { margin-left: auto; display: flex; flex-direction: column; align-items: center; justify-content: center; line-height: 18px; font-size: 11px; }

/* diagram */
.slide { padding-top: 126px; min-width: 0; }
.diagram { position: relative; height: 1080px; background: #fff; overflow: hidden; font-family: Lato, "Liberation Sans", sans-serif; color: #000; }
.lane { position: absolute; top: 1px; height: 1077px; background: #deebf7; }
.lane h3 { background: #bdd7ee; height: 58px; font-size: 33px; line-height: 58px; text-align: center; }
.l-cycler { left: 24px; width: 246px; } .l-battery { left: 340px; width: 286px; } .l-ms { left: 709px; width: 304px; } .l-mp { left: 1138px; width: 304px; } .l-cell { left: 1577px; width: 318px; }
.node { position: absolute; display: flex; align-items: center; justify-content: center; text-align: center; white-space: nowrap; font-size: 29px; line-height: 38px; border: 5px solid; border-radius: 2px; background: #deebf7; }
.big { font-size: 33px; line-height: 43px; }
.thin { border: 2px solid #000; border-radius: 0; }
button.big { font-size: 18px; line-height: 22px; }
.green, .blue, .purple, .red, .yellow { color: #000; }
.green { border-color: #00b050; } .blue { border-color: #4472c4; } .purple { border-color: #7030a0; } .red { border-color: #f00; } .yellow { border-color: #ff0; }
.n-step { left: 25px; top: 597px; width: 246px; height: 60px; }
.n-b1 { left: 338px; top: 86px; width: 291px; height: 151px; }
.n-b2 { left: 339px; top: 306px; width: 292px; height: 150px; }
.n-b3 { left: 337px; top: 555px; width: 291px; height: 281px; }
.n-b4 { left: 338px; top: 859px; width: 290px; height: 98px; }
.n-b5 { left: 337px; top: 980px; width: 291px; height: 98px; }
.n-s1 { left: 705px; top: 79px; width: 310px; height: 252px; }
.n-s2 { left: 708px; top: 349px; width: 306px; height: 253px; }
.n-s3 { left: 710px; top: 623px; width: 306px; height: 174px; }
.n-s4 { left: 711px; top: 820px; width: 306px; height: 136px; }
.n-s5 { left: 711px; top: 976px; width: 303px; height: 93px; }
.n-p1 { left: 1135px; top: 64px; width: 310px; height: 253px; }
.n-p2 { left: 1137px; top: 352px; width: 305px; height: 252px; }
.n-p3 { left: 1135px; top: 638px; width: 306px; height: 136px; }
.n-p4 { left: 1138px; top: 821px; width: 307px; height: 136px; }
.n-p5 { left: 1139px; top: 967px; width: 304px; height: 93px; }
.n-c1 { left: 1576px; top: 80px; width: 321px; height: 456px; }
.n-c2 { left: 1575px; top: 693px; width: 318px; height: 104px; }
.links { position: absolute; left: 0; top: 0; pointer-events: none; }
```
